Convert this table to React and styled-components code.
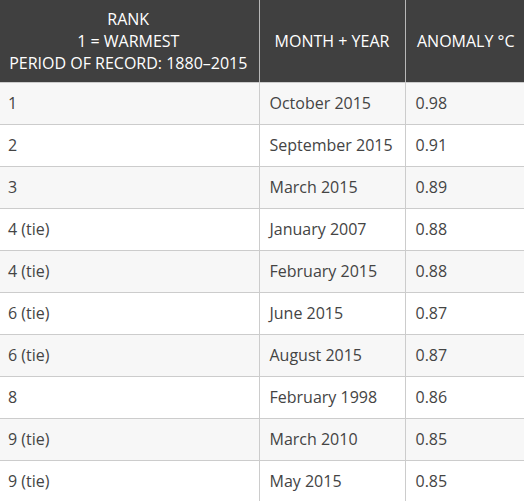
import React from 'react';
import styled, { createGlobalStyle } from 'styled-components';

const GlobalStyle = createGlobalStyle`
  html, body {
    margin: 0;
    padding: 0;
    background: #ffffff;
  }
  body {
    font-family: "Open Sans", "Liberation Sans", sans-serif;
    overflow: hidden;
  }
`;

const Table = styled.table`
  border-collapse: collapse;
  table-layout: fixed;
  width: 528px;
  margin-left: -2px;
  font-size: 16px;
  line-height: 22px;
`;

const Col = styled.col`
  width: ${(p) => p.$width}px;
`;

const HeadCell = styled.th`
  box-sizing: border-box;
  background: #404040;
  color: #ffffff;
  font-weight: 400;
  text-align: center;
  padding: 8px 4px;
  height: 82px;
  border-left: 1px solid #b8b8b8;
  border-bottom: 1px solid #cccccc;
  white-space: nowrap;

  &:first-child {
    border-left: none;
  }
`;

const Row = styled.tr`
  background: ${(p) => (p.$striped ? '#f7f7f7' : '#ffffff')};
`;

const Cell = styled.td`
  box-sizing: border-box;
  height: 42px;
  color: #444444;
  padding: 9px 10px 10px;
  border-left: 1px solid #cccccc;
  border-bottom: 1px solid #cccccc;
  white-space: nowrap;

  &:first-child {
    border-left: none;
  }
`;

const rows = [
  ['1', 'October 2015', '0.98'],
  ['2', 'September 2015', '0.91'],
  ['3', 'March 2015', '0.89'],
  ['4 (tie)', 'January 2007', '0.88'],
  ['4 (tie)', 'February 2015', '0.88'],
  ['6 (tie)', 'June 2015', '0.87'],
  ['6 (tie)', 'August 2015', '0.87'],
  ['8', 'February 1998', '0.86'],
  ['9 (tie)', 'March 2010', '0.85'],
  ['9 (tie)', 'May 2015', '0.85'],
];

const App = () => {
  return (
    <>
      <GlobalStyle />
      <Table>
        <colgroup>
          <Col $width={261} />
          <Col $width={146} />
          <Col $width={121} />
        </colgroup>
        <thead>
          <tr>
            <HeadCell>
              RANK
              <br />
              1 = WARMEST
              <br />
              PERIOD OF RECORD: 1880–2015
            </HeadCell>
            <HeadCell>MONTH + YEAR</HeadCell>
            <HeadCell>ANOMALY °C</HeadCell>
          </tr>
        </thead>
        <tbody>
          {rows.map((row, i) => (
            <Row key={i} $striped={i % 2 === 0}>
              {row.map((value, j) => (
                <Cell key={j}>{value}</Cell>
              ))}
            </Row>
          ))}
        </tbody>
      </Table>
    </>
  );
};

export default App;
